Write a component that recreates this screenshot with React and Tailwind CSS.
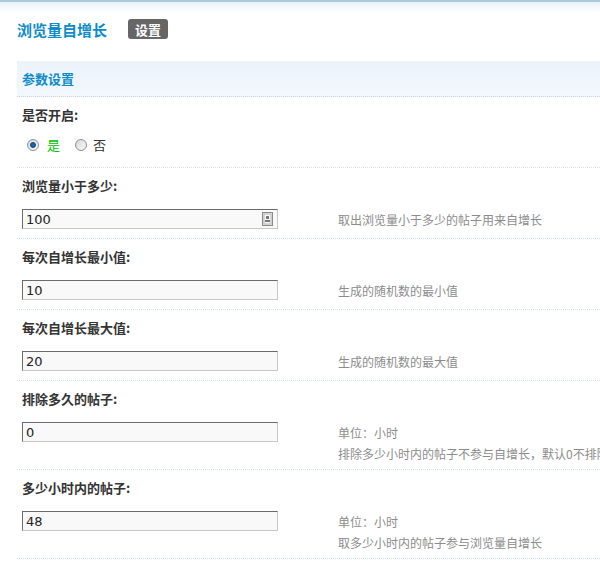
const rows = [
  { label: "浏览量小于多少:", value: "100", spin: true, desc: ["取出浏览量小于多少的帖子用来自增长"] },
  { label: "每次自增长最小值:", value: "10", desc: ["生成的随机数的最小值"] },
  { label: "每次自增长最大值:", value: "20", desc: ["生成的随机数的最大值"] },
  { label: "排除多久的帖子:", value: "0", desc: ["单位：小时", "排除多少小时内的帖子不参与自增长，默认0不排除"] },
  { label: "多少小时内的帖子:", value: "48", desc: ["单位：小时", "取多少小时内的帖子参与浏览量自增长"] },
];

const Radio = ({ checked }) => (
  <span className="w-[12px] h-[12px] rounded-full border border-[#8f8f8f] bg-gradient-to-br from-[#d8d8d8] to-[#fafafa] flex items-center justify-center">
    {checked && <span className="w-[6px] h-[6px] rounded-full bg-[#1c63a8] border border-[#0e4a86]" />}
  </span>
);

const Spin = () => (
  <svg width="11" height="14" viewBox="0 0 11 14" className="mr-[4px]">
    <rect x="0.5" y="0.5" width="10" height="13" fill="#e8e8e8" stroke="#8a8a8a" />
    <rect x="2" y="2" width="7" height="10" fill="#f6f6f6" stroke="#b8b8b8" />
    <rect x="4" y="4" width="3" height="3" fill="#777" />
    <rect x="3" y="8" width="5" height="2" fill="#777" />
  </svg>
);

export default function App() {
  return (
    <div className="w-[600px] h-[566px] overflow-hidden bg-white text-[12px] text-[#333] font-['Noto_Sans_CJK_SC','Noto_Sans',sans-serif]">
      <div className="h-[12px] border-t-2 border-[#a9cbdc] bg-gradient-to-b from-[#e6f2f8] to-white" />
      <div className="pl-[17px]">
        <div className="flex items-center h-[36px] mt-[-1px]">
          <span className="text-[15px] font-bold text-[#0d8cc8] leading-none">浏览量自增长</span>
          <span className="ml-[21px] h-[20px] w-[40px] rounded-[3px] bg-[#666] text-white text-[13px] font-bold flex items-center justify-center leading-none">设置</span>
        </div>
        <div className="mt-[14px] h-[36px] bg-gradient-to-b from-[#ecf3fb] to-[#f3f8fd] border-b border-dotted border-[#c9d9ea] flex items-center pl-[5px]">
          <span className="font-bold text-[13px] text-[#0d8cc8]">参数设置</span>
        </div>
        <div className="h-[71px] border-b border-dotted border-[#cfe3f0] pl-[5px]">
          <div className="pt-[8px] h-[28px] leading-[20px] text-[13px] font-bold">是否开启:</div>
          <div className="mt-[11px] flex items-center h-[18px] text-[13px]">
            <span className="ml-[5px]"><Radio checked /></span>
            <span className="ml-[8px] text-[#00c400]">是</span>
            <span className="ml-[15px]"><Radio /></span>
            <span className="ml-[6px]">否</span>
          </div>
        </div>
        {rows.map((r) => (
          <div
            key={r.label}
            className={`${r.desc.length > 1 ? "h-[89px]" : "h-[71px]"} border-b border-dotted border-[#cfe3f0] pl-[5px]`}
          >
            <div className="pt-[8px] h-[28px] leading-[20px] text-[13px] font-bold">{r.label}</div>
            <div className="mt-[13px] flex items-start">
              <div className="shrink-0 w-[256px] h-[20px] bg-[#f9f9f9] border border-t-[#6b6b6b] border-l-[#6b6b6b] border-r-[#c8c8c8] border-b-[#c8c8c8] flex items-center justify-between">
                <span className="pl-[3px] text-[13px] text-[#222] font-['DejaVu_Sans',sans-serif] leading-none">{r.value}</span>
                {r.spin && <Spin />}
              </div>
              <div className="ml-[60px] text-[#8c8c8c] leading-[21px] whitespace-nowrap">
                {r.desc.map((d) => (
                  <div key={d}>{d}</div>
                ))}
              </div>
            </div>
          </div>
        ))}
      </div>
    </div>
  );
}
